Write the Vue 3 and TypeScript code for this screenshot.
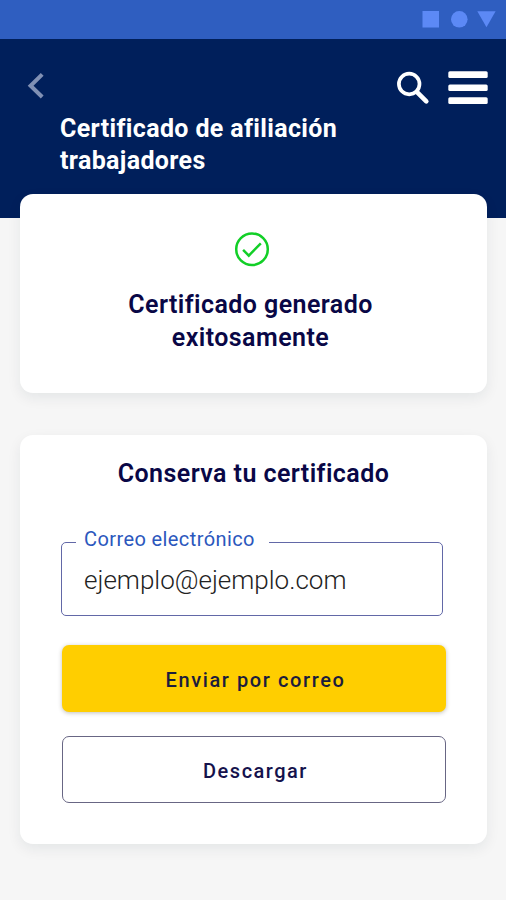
<script setup lang="ts">
import { ref } from 'vue'

const email = ref<string>('ejemplo@ejemplo.com')
</script>

<template>
  <div class="screen">
    <div class="status-bar">
      <svg class="status-icons" width="74" height="18" viewBox="0 0 74 18" aria-hidden="true">
        <rect x="0.5" y="1" width="16.5" height="16.5" />
        <circle cx="37.3" cy="9.3" r="8.3" />
        <path d="M55.3 1.3H73.6L64.5 17.3Z" />
      </svg>
    </div>

    <header class="header">
      <div class="toolbar">
        <button class="icon-button" type="button" aria-label="Volver">
          <svg width="20" height="28" viewBox="0 0 20 28">
            <path d="M17.2 2.4L5.6 13.7L17.2 25" fill="none" stroke="#8090b4" stroke-width="4" />
          </svg>
        </button>
        <div class="actions">
          <button class="icon-button" type="button" aria-label="Buscar">
            <svg width="34" height="34" viewBox="0 0 34 34" fill="none" stroke="#fff">
              <circle cx="13.2" cy="13" r="10.3" stroke-width="3.7" />
              <path d="M20.8 20.8L30.3 30.3" stroke-width="4.6" stroke-linecap="round" />
            </svg>
          </button>
          <button class="icon-button" type="button" aria-label="Menú">
            <svg width="40" height="34" viewBox="0 0 40 34" fill="#fff">
              <rect x="0.3" y="0.2" width="39.4" height="6.8" rx="1.6" />
              <rect x="0.3" y="13.5" width="39.4" height="6.6" rx="1.6" />
              <rect x="0.3" y="26.2" width="39.4" height="6.8" rx="1.6" />
            </svg>
          </button>
        </div>
      </div>
      <h1 class="title">Certificado de afiliación<br />trabajadores</h1>
    </header>

    <main class="content">
      <section class="card result">
        <svg class="check" width="36" height="36" viewBox="0 0 36 36" fill="none" stroke="#12cf27">
          <circle cx="18" cy="18.3" r="15.8" stroke-width="2.5" />
          <path d="M9.1 18.9L14.8 24.6L26.8 12.3" stroke-width="2.5" />
        </svg>
        <h2 class="heading">Certificado generado<br />exitosamente</h2>
      </section>

      <section class="card keep">
        <h2 class="heading keep-heading">Conserva tu certificado</h2>
        <fieldset class="field">
          <legend><label for="email">Correo electrónico</label></legend>
          <input id="email" v-model="email" type="email" />
        </fieldset>
        <button class="button primary" type="button">Enviar por correo</button>
        <button class="button outlined" type="button">Descargar</button>
      </section>
    </main>
  </div>
</template>

<style>
body {
  margin: 0;
}
</style>

<style scoped>
.screen {
  box-sizing: border-box;
  height: 900px;
  background: #f6f6f6;
  font-family: Roboto, "Liberation Sans", sans-serif;
  overflow: hidden;
}

.status-bar {
  height: 39px;
  box-sizing: border-box;
  padding: 10px 10px 0 0;
  display: flex;
  justify-content: flex-end;
  background: #2f5ec0;
}

.status-icons {
  fill: #5c89f5;
}

.header {
  box-sizing: border-box;
  height: 179px;
  padding: 32px 18px 0 25px;
  background: #001f5b;
}

.toolbar {
  display: flex;
  align-items: center;
  justify-content: space-between;
  height: 34px;
}

.actions {
  display: flex;
  gap: 18px;
}

.icon-button {
  display: flex;
  padding: 0;
  border: 0;
  background: none;
}

.toolbar > .icon-button {
  margin-top: -5px;
}

.title {
  margin: 8px 0 0 35px;
  font-size: 25px;
  line-height: 32px;
  font-weight: 700;
  letter-spacing: 0.36px;
  color: #fff;
}

.content {
  display: flex;
  flex-direction: column;
  gap: 42px;
  margin-top: -24px;
  padding: 0 19px 0 20px;
}

.card {
  box-sizing: border-box;
  border-radius: 13px;
  background: #fff;
  box-shadow: 0 5px 14px rgba(20, 35, 50, 0.075);
}

.result {
  height: 199px;
  display: flex;
  flex-direction: column;
  align-items: center;
  padding-top: 37px;
}

.check {
  margin-right: 3px;
}

.heading {
  margin: 21px 6px 0 0;
  text-align: center;
  font-size: 25px;
  line-height: 33px;
  font-weight: 600;
  letter-spacing: 0.43px;
  color: #090746;
}

.keep {
  height: 409px;
  display: flex;
  flex-direction: column;
  padding: 22px 41px 0 41px;
}

.keep-heading {
  margin: 0;
}

.field {
  box-sizing: border-box;
  width: 382px;
  height: 88px;
  margin: 38px 0 0;
  padding: 0 0 0 14px;
  min-width: 0;
  border: 1px solid #6268a7;
  border-radius: 5px;
}

.field legend {
  padding: 0 14px 0 8px;
  height: 28px;
  font-size: 20px;
  line-height: 22px;
  letter-spacing: 0.4px;
  color: #2b57bd;
}

.field input {
  box-sizing: border-box;
  width: 100%;
  height: 48px;
  margin: 0;
  padding: 0 8px;
  border: 0;
  outline: 0;
  background: none;
  font: 300 26px/48px Roboto, "Liberation Sans", sans-serif;
  color: #222;
}

.button {
  box-sizing: border-box;
  width: 384px;
  height: 67px;
  margin: 29px 0 0 1px;
  padding: 2px 0 0 3px;
  border: 0;
  border-radius: 7px;
  font: 500 20px/24px Roboto, "Liberation Sans", sans-serif;
  letter-spacing: 1.6px;
  color: #1c1c3c;
}

.primary {
  background: #ffce00;
  box-shadow: 0 1px 4px rgba(50, 45, 30, 0.3);
}

.outlined {
  margin-top: 24px;
  border: 1px solid #686684;
  background: #fff;
  letter-spacing: 1.5px;
  color: #15124c;
}
</style>
